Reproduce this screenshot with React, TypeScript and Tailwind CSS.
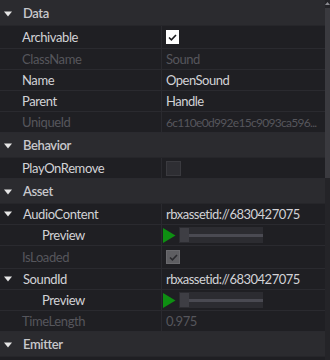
import React from 'react';

type Row =
  | { kind: 'header'; label: string }
  | {
      kind: 'prop';
      label: string;
      value?: string;
      disabled?: boolean;
      indent?: boolean;
      expand?: boolean;
      check?: 'on' | 'off' | 'locked';
      preview?: boolean;
      tall?: boolean;
      small?: boolean;
    };

const rows: Row[] = [
  { kind: 'header', label: 'Data' },
  { kind: 'prop', label: 'Archivable', check: 'on', tall: true },
  { kind: 'prop', label: 'ClassName', value: 'Sound', disabled: true },
  { kind: 'prop', label: 'Name', value: 'OpenSound' },
  { kind: 'prop', label: 'Parent', value: 'Handle' },
  { kind: 'prop', label: 'UniqueId', value: '6c110e0d992e15c9093ca596...', disabled: true, small: true },
  { kind: 'header', label: 'Behavior' },
  { kind: 'prop', label: 'PlayOnRemove', check: 'off' },
  { kind: 'header', label: 'Asset' },
  { kind: 'prop', label: 'AudioContent', value: 'rbxassetid://6830427075', expand: true },
  { kind: 'prop', label: 'Preview', indent: true, preview: true },
  { kind: 'prop', label: 'IsLoaded', disabled: true, check: 'locked', tall: true },
  { kind: 'prop', label: 'SoundId', value: 'rbxassetid://6830427075', expand: true },
  { kind: 'prop', label: 'Preview', indent: true, preview: true },
  { kind: 'prop', label: 'TimeLength', value: '0.975', disabled: true },
  { kind: 'header', label: 'Emitter' },
];

function Caret() {
  return (
    <svg width="8" height="6" viewBox="0 0 8 6" className="shrink-0">
      <path d="M0 0.5 H8 L4 5.5 Z" fill="#e6e6e6" />
    </svg>
  );
}

function Check({ color }: { color: string }) {
  return (
    <svg width="9" height="7" viewBox="0 0 9 7">
      <path d="M1 3.5 L3.4 5.8 L8 1" fill="none" stroke={color} strokeWidth="1.6" />
    </svg>
  );
}

function Checkbox({ state }: { state: 'on' | 'off' | 'locked' }) {
  if (state === 'on')
    return (
      <div className="flex h-[14px] w-[13px] items-center justify-center bg-white">
        <Check color="#1b1b1f" />
      </div>
    );
  if (state === 'locked')
    return (
      <div className="flex h-[14px] w-[14px] items-center justify-center border border-[#6a6a6e] bg-[#5e5e62]">
        <Check color="#2a2a2e" />
      </div>
    );
  return <div className="h-[15px] w-[15px] border border-[#3a3a3f] bg-[#2e2e33]" />;
}

function Preview() {
  return (
    <div className="flex items-center">
      <svg width="13" height="15" viewBox="0 0 13 15" className="shrink-0">
        <path d="M0 0 L12.5 7.5 L0 15 Z" fill="#0e8f12" />
      </svg>
      <div className="ml-[3px] flex h-[16px] w-[84px] items-center bg-[#2c2c31] pl-[1px]">
        <div className="h-[14px] w-[9px] bg-[#3e3e44]" />
        <div className="h-[3px] flex-1 bg-[#4a4a52]" />
      </div>
    </div>
  );
}

export default function App() {
  return (
    <div
      className="flex h-[360px] w-[330px] overflow-hidden bg-[#1f1f23] text-[13px] tracking-[-0.4px]"
      style={{ fontFamily: 'Lato, "Noto Sans", sans-serif' }}
    >
      <div className="flex w-[325px] flex-col">
        {rows.map((row, i) =>
          row.kind === 'header' ? (
            <div
              key={i}
              className={`flex ${i === 0 ? 'h-[26px] pt-[2px]' : 'h-[25px] pt-[1px]'} items-center gap-[11px] border-b border-[#26262a] bg-[#2b2b2f] pl-[4px] font-semibold text-[#c8c8cc]`}
            >
              <Caret />
              <span>{row.label}</span>
            </div>
          ) : (
            <div
              key={i}
              className={`flex ${row.tall ? 'h-[23px]' : 'h-[21px]'} border-b border-[#2a2a2f]`}
            >
              <div
                className={`flex w-[162px] shrink-0 items-center border-r border-[#2a2a2f] ${
                  row.indent ? 'pl-[42px]' : row.expand ? 'gap-[11px] pl-[4px]' : 'pl-[22px]'
                } ${row.disabled ? 'text-[#56565c]' : 'text-[#d2d2d6]'}`}
              >
                {row.expand && <Caret />}
                <span className="translate-y-[1px]">{row.label}</span>
              </div>
              <div
                className={`flex min-w-0 flex-1 items-center overflow-hidden ${row.preview ? 'pl-[1px]' : 'pl-[4px]'} ${
                  row.disabled ? 'text-[#56565c]' : 'text-[#d2d2d6]'
                }`}
              >
                {row.check && <Checkbox state={row.check} />}
                {row.preview && <Preview />}
                {row.value && (
                  <span
                    className={`translate-y-[1px] whitespace-nowrap ${
                      row.small ? 'text-[12px] tracking-[-0.7px]' : 'tracking-[-0.5px]'
                    }`}
                  >
                    {row.value}
                  </span>
                )}
              </div>
            </div>
          )
        )}
      </div>
      <div className="flex w-[5px] flex-col bg-[#242428]">
        <div className="flex h-[8px] items-start justify-center pt-[2px]">
          <svg width="5" height="3" viewBox="0 0 5 3">
            <path d="M0 3 L2.5 0 L5 3 Z" fill="#8a8a90" />
          </svg>
        </div>
        <div className="h-[170px] bg-[#3a3a3f]" />
      </div>
    </div>
  );
}
